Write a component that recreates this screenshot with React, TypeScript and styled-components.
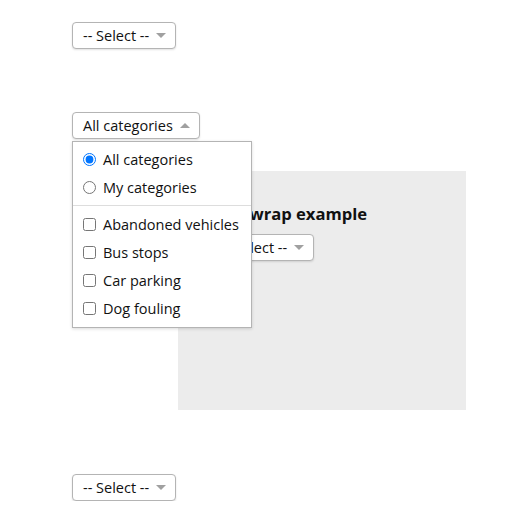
import { useState } from "react";
import styled, { createGlobalStyle } from "styled-components";

const GlobalStyle = createGlobalStyle`
  body {
    margin: 8px;
    font-family: "Open Sans", "Noto Sans", "Liberation Sans", sans-serif;
    font-size: 14.5px;
    color: #111;
    background: #fff;
  }
`;

const Page = styled.div`
  display: flex;
  flex-direction: column;
  align-items: flex-start;
  padding: 14px 0 0 64px;
`;

const Holder = styled.div<{ $gap?: number }>`
  position: relative;
  margin-top: ${(p) => p.$gap || 0}px;
`;

const Trigger = styled.button`
  display: inline-flex;
  align-items: center;
  gap: 7px;
  height: 27px;
  padding: 0 9px 0 10px;
  font: inherit;
  color: #111;
  background: #fff;
  border: 1px solid #b4b4b4;
  border-radius: 4px;
  box-shadow: 0 1px 2px rgba(0, 0, 0, 0.12);
  cursor: pointer;
`;

const Caret = styled.span<{ $up?: boolean }>`
  width: 0;
  height: 0;
  border-left: 5px solid transparent;
  border-right: 5px solid transparent;
  ${(p) => (p.$up ? "border-bottom: 5px solid #a0a0a0;" : "border-top: 5px solid #a0a0a0;")}
`;

const Menu = styled.div`
  position: absolute;
  top: calc(100% + 2px);
  left: 0;
  z-index: 5;
  width: 180px;
  box-sizing: border-box;
  padding: 3px 0 5px;
  background: #fff;
  border: 1px solid #b4b4b4;
  box-shadow: 0 1px 3px rgba(0, 0, 0, 0.15);
`;

const Option = styled.label`
  display: flex;
  align-items: center;
  gap: 7px;
  height: 28px;
  padding: 0 10px;
  white-space: nowrap;
  cursor: pointer;
  input {
    margin: 0;
    width: 13px;
    height: 13px;
  }
`;

const Divider = styled.div`
  height: 1px;
  margin: 4px 0;
  background: #ddd;
`;

const Panel = styled.div`
  margin: 32px 0 0 106px;
  width: 288px;
  height: 239px;
  box-sizing: border-box;
  padding: 32px;
  background: #ececec;
`;

const Heading = styled.h3`
  margin: 0 0 9px;
  font-size: 16.6px;
  line-height: 22px;
  font-weight: 700;
`;

const Select = ({ label, gap }: { label: string; gap?: number }) => (
  <Holder $gap={gap}>
    <Trigger type="button">
      {label}
      <Caret />
    </Trigger>
  </Holder>
);

const categories = ["Abandoned vehicles", "Bus stops", "Car parking", "Dog fouling"];

const CategoryFilter = () => {
  const [scope, setScope] = useState("all");
  const [picked, setPicked] = useState<string[]>([]);
  const toggle = (c: string) =>
    setPicked(picked.includes(c) ? picked.filter((x) => x !== c) : [...picked, c]);

  return (
    <Holder $gap={63}>
      <Trigger type="button">
        All categories
        <Caret $up />
      </Trigger>
      <Menu>
        <Option>
          <input type="radio" name="scope" checked={scope === "all"} onChange={() => setScope("all")} />
          All categories
        </Option>
        <Option>
          <input type="radio" name="scope" checked={scope === "mine"} onChange={() => setScope("mine")} />
          My categories
        </Option>
        <Divider />
        {categories.map((c) => (
          <Option key={c}>
            <input type="checkbox" checked={picked.includes(c)} onChange={() => toggle(c)} />
            {c}
          </Option>
        ))}
      </Menu>
    </Holder>
  );
};

export default function App() {
  return (
    <>
      <GlobalStyle />
      <Page>
        <Select label="-- Select --" />
        <CategoryFilter />
        <Panel>
          <Heading>Line wrap example</Heading>
          <Select label="-- Select --" />
        </Panel>
        <Select label="-- Select --" gap={64} />
      </Page>
    </>
  );
}
